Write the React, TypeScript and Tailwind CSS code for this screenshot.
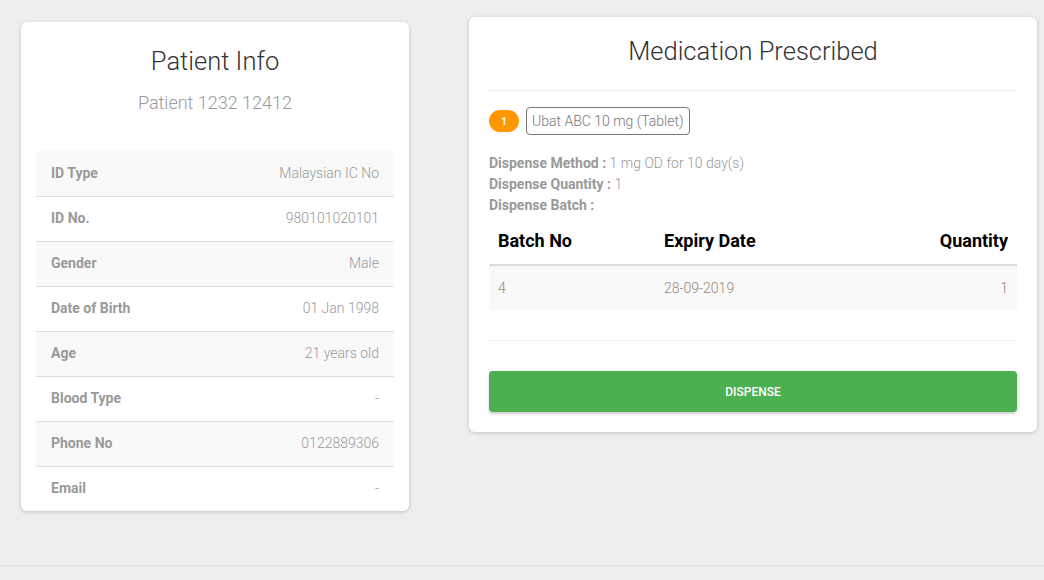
import React from "react";

// Patient rows shown in the left card.
const patientRows: [string, string][] = [
  ["ID Type", "Malaysian IC No"],
  ["ID No.", "980101020101"],
  ["Gender", "Male"],
  ["Date of Birth", "01 Jan 1998"],
  ["Age", "21 years old"],
  ["Blood Type", "-"],
  ["Phone No", "0122889306"],
  ["Email", "-"],
];

const dispenseInfo: [string, string][] = [
  ["Dispense Method", "1 mg OD for 10 day(s)"],
  ["Dispense Quantity", "1"],
  ["Dispense Batch", ""],
];

function PatientCard() {
  return (
    <div className="w-[388px] mt-[22px] bg-white rounded-md shadow-[0_1px_4px_rgba(0,0,0,0.18)] overflow-hidden">
      <div className="pt-[24px] pb-[36px] text-center">
        <h2 className="text-[25.5px] leading-[30px] font-light text-[#333]">Patient Info</h2>
        <p className="mt-[15px] text-[18px] leading-[24px] font-light text-[#999]">Patient 1232 12412</p>
      </div>
      <div className="px-[15px]">
        {patientRows.map(([label, value], i) => (
          <div
            key={label}
            className={
              "flex items-center justify-between h-[45px] px-[15px] text-[14px] border-[#ddd] " +
              (i % 2 === 0 ? "bg-[#f9f9f9]" : "bg-white") +
              (i > 0 ? " border-t pb-[1px]" : "")
            }
          >
            <span className="font-bold text-[#999]">{label}</span>
            <span className="font-light text-[#999]">{value}</span>
          </div>
        ))}
      </div>
    </div>
  );
}

function MedicationCard() {
  return (
    <div className="w-[568px] mt-[17px] self-start bg-white rounded-md shadow-[0_1px_4px_rgba(0,0,0,0.18)] px-[20px] pb-[20px]">
      <h2 className="pt-[19px] text-center text-[25.5px] leading-[30px] font-light text-[#333]">Medication Prescribed</h2>
      <div className="mt-[24px] border-t border-[#eee]" />
      <div className="mt-[16px] flex items-center gap-[7px]">
        <span className="w-[30px] h-[22px] rounded-full bg-[#ff9800] text-white text-[10px] font-bold flex items-center justify-center">
          1
        </span>
        <span className="h-[28px] px-[5px] border border-[#777] rounded-[4px] flex items-center text-[14px] font-light text-[#777]">
          Ubat ABC 10 mg (Tablet)
        </span>
      </div>
      <div className="mt-[18px] text-[14px] leading-[21px] text-[#999]">
        {dispenseInfo.map(([label, value]) => (
          <div key={label}>
            <span className="font-bold">{label} : </span>
            <span className="font-light">{value}</span>
          </div>
        ))}
      </div>
      <div className="mt-[2px]">
        <div className="grid grid-cols-[166px_1fr_auto] h-[48px] pb-[2px] items-center px-[9px] border-b-2 border-[#ddd] text-[18px] font-bold text-black">
          <span>Batch No</span>
          <span>Expiry Date</span>
          <span className="text-right">Quantity</span>
        </div>
        <div className="grid grid-cols-[166px_1fr_auto] h-[44px] items-center px-[9px] bg-[#f9f9f9] text-[14px] font-light text-[#998877]">
          <span>4</span>
          <span>28-09-2019</span>
          <span className="text-right">1</span>
        </div>
      </div>
      <div className="mt-[30px] border-t border-[#eee]" />
      <button className="mt-[30px] w-full h-[41px] rounded-[4px] bg-[#4caf50] text-white text-[12px] font-medium shadow-[0_2px_3px_rgba(0,0,0,0.2)]">
        DISPENSE
      </button>
    </div>
  );
}

export default function App() {
  return (
    <div className="min-h-[580px] bg-[#eeeeee] flex flex-col font-['Roboto',sans-serif]">
      <div className="flex-1 flex items-start pl-[21px] gap-[60px] h-[565px]">
        <PatientCard />
        <MedicationCard />
      </div>
      <div className="h-[15px] border-t border-[#e2e2e2]" />
    </div>
  );
}
